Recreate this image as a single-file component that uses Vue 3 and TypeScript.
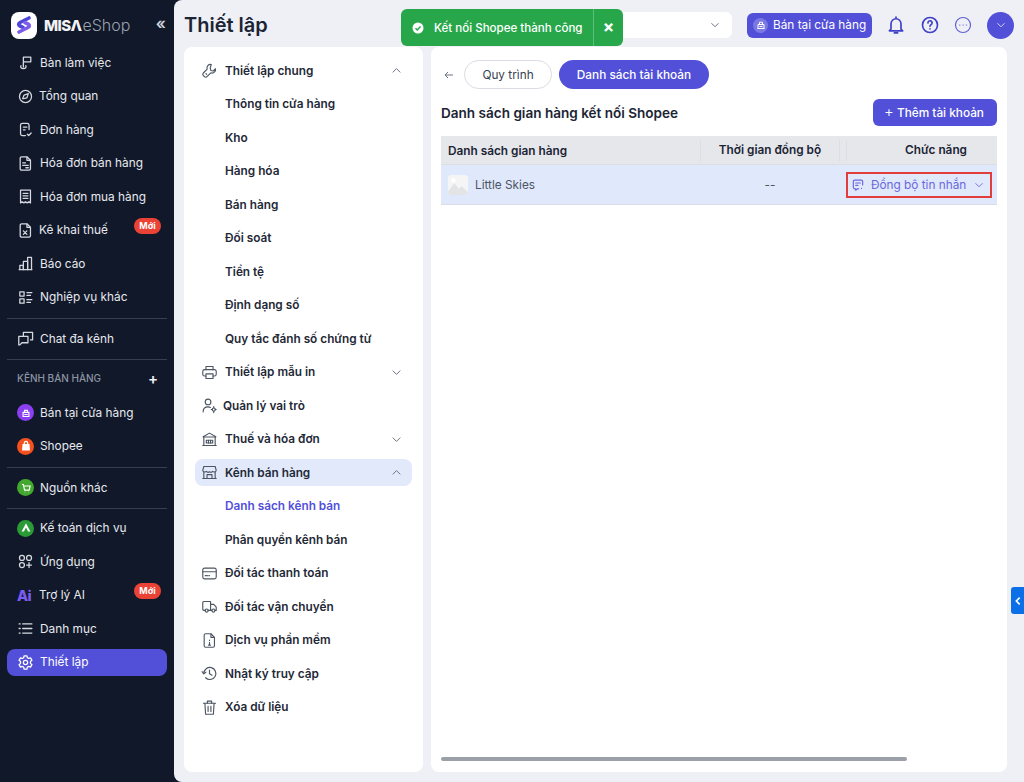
<script setup lang="ts">
interface NavItem {
  label: string
  icon?: string[]
  badge?: boolean
  active?: boolean
  tight?: boolean
  ai?: boolean
}
interface SetItem {
  label: string
  icon?: string[]
  chev?: 'up' | 'down'
  sub?: boolean
  active?: boolean
  tight?: boolean
  current?: boolean
}

const ic = {
  flag: ['M9 14V4.5h10.5V11H9', 'M9 14v4.5', 'M5.5 16.5c-1 2.5.5 4 3.5 4s4.5-1.5 3.5-4'],
  gauge: ['M12 3.5a8.5 8.5 0 1 0 0 17a8.5 8.5 0 1 0 0-17z', 'M8 15l2-5 6-2-2 6-5 1z'],
  order: ['M17 12V6a2.5 2.5 0 0 0-2.5-2.5h-7A2.5 2.5 0 0 0 5 6v12a2.5 2.5 0 0 0 2.5 2.5H12', 'M9 8.5h5M9 12.5h2.5', 'M14.5 18.5l2 2 3.5-3.5'],
  invoice: ['M6.5 2.5h7.5l5 5v12a2 2 0 0 1-2 2h-10.5a2 2 0 0 1-2-2v-15a2 2 0 0 1 2-2z', 'M14 3v4.5h4.5', 'M8 11h4M8 14.5h8M12.5 18h3.5'],
  receipt: ['M5 3h14v18l-2.3-1.6L14.3 21 12 19.4 9.7 21l-2.4-1.6L5 21z', 'M8.5 7.5h7M8.5 11h7M8.5 14.5h7'],
  tax: ['M6.5 2.5h7.5l5 5v12a2 2 0 0 1-2 2h-10.5a2 2 0 0 1-2-2v-15a2 2 0 0 1 2-2z', 'M14 3v4.5h4.5', 'M9 12.5l5 5M14 12.5l-5 5'],
  chart: ['M3 20.5h18', 'M4 20.5v-6h5v6', 'M9 20.5V9h6v11.5', 'M15 20.5V3.5h5.5v17'],
  ops: ['M4 4h6v6H4zM4 14h6v6H4z', 'M14 5h7M14 9h5M14 15h7M14 19h5'],
  chat: ['M9 8V3.5h13V14h-3', 'M2.5 9h13v9H7l-3 3h-1.5z'],
  apps: ['M7 3.5a3.5 3.5 0 1 0 0 7a3.5 3.5 0 1 0 0-7z', 'M17 3.5a3.5 3.5 0 1 0 0 7a3.5 3.5 0 1 0 0-7z', 'M7 13.5a3.5 3.5 0 1 0 0 7a3.5 3.5 0 1 0 0-7z', 'M17 13.5v7M13.5 17h7'],
  list: ['M8 5.5h13M8 12h13M8 18.5h13', 'M3 5.5h1.5M3 12h1.5M3 18.5h1.5'],
  gear: ['M12 9a3 3 0 1 0 0 6a3 3 0 1 0 0-6z', 'M10 2.5h4l.6 2.8 1.8 1 2.7-.9 2 3.4-2.1 1.9v2.5l2.1 1.9-2 3.4-2.7-.9-1.8 1-.6 2.8h-4l-.6-2.8-1.8-1-2.7.9-2-3.4 2.1-1.9v-2.5l-2.1-1.9 2-3.4 2.7.9 1.8-1z'],
  wrench: ['M14.5 3.5a5 5 0 0 0-5.8 6.6L3.3 15.5a2.6 2.6 0 0 0 0 3.6l1.6 1.6a2.6 2.6 0 0 0 3.6 0l5.4-5.4a5 5 0 0 0 6.6-5.8l-3.2 3.2-3.5-.8-.8-3.5z', 'M7 16.5l1 1'],
  printer: ['M7 8V3.5h10V8', 'M7 17H5a2.5 2.5 0 0 1-2.5-2.5v-4A2.5 2.5 0 0 1 5 8h14a2.5 2.5 0 0 1 2.5 2.5v4A2.5 2.5 0 0 1 19 17h-2', 'M7 14h10v6.5H7z'],
  role: ['M10 3a4 4 0 1 0 0 8a4 4 0 1 0 0-8z', 'M3 21c0-4.5 3-7 7-7 1.2 0 2.3.2 3.2.7', 'M18 15.5a2.2 2.2 0 1 0 0 4.4a2.2 2.2 0 1 0 0-4.4z', 'M18 13.5v1.5M18 20.5V22M14.5 17.7H16M20 17.7h1.5'],
  bank: ['M3 8l9-5 9 5', 'M3.5 8.5h17', 'M4 8.5v12h16v-12', 'M7.5 13h9v4h-9z', 'M10.5 13v4M13.5 13v4', 'M2.5 20.5h19'],
  store: ['M4 3.5h16l1.5 5.5a3 3 0 0 1-5 1.5 3.5 3.5 0 0 1-4.5.5 3.5 3.5 0 0 1-4.5-.5 3 3 0 0 1-5-1.5z', 'M4 11.5v9h16v-9', 'M8.5 20.5V15h7v5.5', 'M2.5 20.5h19'],
  card: ['M5 4.5h14a2.5 2.5 0 0 1 2.5 2.5v10a2.5 2.5 0 0 1-2.5 2.5H5A2.5 2.5 0 0 1 2.5 17V7A2.5 2.5 0 0 1 5 4.5z', 'M2.5 9.5h19', 'M6 15h3M11 15h1'],
  truck: ['M6 17.5H4a1.5 1.5 0 0 1-1.5-1.5V6.5A1.5 1.5 0 0 1 4 5h9.5v12.5H10', 'M13.5 9h4.5l3.5 4v4.5h-2', 'M8 15.5a2.2 2.2 0 1 0 0 4.4a2.2 2.2 0 1 0 0-4.4z', 'M17.5 15.5a2.2 2.2 0 1 0 0 4.4a2.2 2.2 0 1 0 0-4.4z', 'M13.5 17.5h2'],
  fileInfo: ['M6.5 2.5h7.5l5 5v12a2 2 0 0 1-2 2h-10.5a2 2 0 0 1-2-2v-15a2 2 0 0 1 2-2z', 'M14 3v4.5h4.5', 'M12 11.5v.5M12 14.5v4M10.5 18.5h3'],
  history: ['M4 12a8.5 8.5 0 1 1 2.5 6', 'M1.5 9.5L4 12.5l3-2.5', 'M12 7v5.5l3.5 2'],
  trash: ['M3.5 6h17', 'M9 6V3h6v3', 'M5.5 6l1 15.5h11l1-15.5', 'M10 10.5v7M14 10.5v7'],
}

const navTop: NavItem[] = [
  { label: 'Bàn làm việc', icon: ic.flag },
  { label: 'Tổng quan', icon: ic.gauge, tight: true },
  { label: 'Đơn hàng', icon: ic.order },
  { label: 'Hóa đơn bán hàng', icon: ic.invoice },
  { label: 'Hóa đơn mua hàng', icon: ic.receipt },
  { label: 'Kê khai thuế', icon: ic.tax, badge: true, tight: true },
  { label: 'Báo cáo', icon: ic.chart },
  { label: 'Nghiệp vụ khác', icon: ic.ops },
]
const navBottom: NavItem[] = [
  { label: 'Ứng dụng', icon: ic.apps },
  { label: 'Trợ lý AI', ai: true, badge: true, tight: true },
  { label: 'Danh mục', icon: ic.list },
  { label: 'Thiết lập', icon: ic.gear, active: true },
]

const settings: SetItem[] = [
  { label: 'Thiết lập chung', icon: ic.wrench, chev: 'up' },
  { label: 'Thông tin cửa hàng', sub: true },
  { label: 'Kho', sub: true },
  { label: 'Hàng hóa', sub: true },
  { label: 'Bán hàng', sub: true },
  { label: 'Đối soát', sub: true },
  { label: 'Tiền tệ', sub: true },
  { label: 'Định dạng số', sub: true },
  { label: 'Quy tắc đánh số chứng từ', sub: true },
  { label: 'Thiết lập mẫu in', icon: ic.printer, chev: 'down' },
  { label: 'Quản lý vai trò', icon: ic.role, tight: true },
  { label: 'Thuế và hóa đơn', icon: ic.bank, chev: 'down' },
  { label: 'Kênh bán hàng', icon: ic.store, chev: 'up', active: true },
  { label: 'Danh sách kênh bán', sub: true, current: true },
  { label: 'Phân quyền kênh bán', sub: true },
  { label: 'Đối tác thanh toán', icon: ic.card },
  { label: 'Đối tác vận chuyển', icon: ic.truck },
  { label: 'Dịch vụ phần mềm', icon: ic.fileInfo },
  { label: 'Nhật ký truy cập', icon: ic.history },
  { label: 'Xóa dữ liệu', icon: ic.trash },
]
</script>

<template>
  <div class="app">
    <aside class="side">
      <div class="brand">
        <span class="logo">
          <svg viewBox="0 0 26 26" width="26" height="26">
            <path d="M18 6L9 10.5c-1.8.9-1.8 2.7 0 3.5l3 1.3" fill="none" stroke="#4f46d8" stroke-width="3.6" stroke-linecap="round" />
            <path d="M8 20l9-4.5c1.8-.9 1.8-2.7 0-3.5l-3-1.3" fill="none" stroke="#7c5ce8" stroke-width="3.6" stroke-linecap="round" />
          </svg>
        </span>
        <span class="brand-a">MISΛ</span><span class="brand-b">eShop</span>
        <span class="collapse">«</span>
      </div>

      <div v-for="n in navTop" :key="n.label" class="nav" :class="{ tight: n.tight }">
        <svg class="nav-ic" viewBox="0 0 24 24"><path v-for="d in n.icon" :key="d" :d="d" /></svg>
        <span>{{ n.label }}</span>
        <em v-if="n.badge" class="badge">Mới</em>
      </div>
      <hr class="rule" />
      <div class="nav">
        <svg class="nav-ic" viewBox="0 0 24 24"><path v-for="d in ic.chat" :key="d" :d="d" /></svg>
        <span>Chat đa kênh</span>
      </div>
      <hr class="rule" />
      <div class="section"><span>KÊNH BÁN HÀNG</span><b>+</b></div>
      <div class="nav">
        <span class="dot purple">
          <svg viewBox="0 0 24 24"><path d="M7 18V11h10v7zM6 18h12M9.5 11V7.5h5V11M9 14.5h6" /></svg>
        </span>
        <span>Bán tại cửa hàng</span>
      </div>
      <div class="nav">
        <span class="dot orange">
          <svg viewBox="0 0 24 24"><path class="solid" d="M6 8.5h12l.8 11H5.2z" /><path d="M9 8.5c0-6 6-6 6 0" /></svg>
        </span>
        <span>Shopee</span>
      </div>
      <hr class="rule" />
      <div class="nav">
        <span class="dot green">
          <svg viewBox="0 0 24 24"><path d="M5 6h2.5l2 9.500h8L19 8.500H8" /><path d="M10 19h.5M16.500 19h.5" /></svg>
        </span>
        <span>Nguồn khác</span>
      </div>
      <hr class="rule snug" />
      <div class="nav">
        <span class="dot dgreen">
          <svg viewBox="0 0 24 24"><path class="solid" d="M12 4l7.5 14h-4L12 11l-3.5 7h-4z" /></svg>
        </span>
        <span>Kế toán dịch vụ</span>
      </div>
      <div v-for="n in navBottom" :key="n.label" class="nav" :class="{ tight: n.tight, active: n.active }">
        <span v-if="n.ai" class="ai">Ai</span>
        <svg v-else class="nav-ic" viewBox="0 0 24 24"><path v-for="d in n.icon" :key="d" :d="d" /></svg>
        <span>{{ n.label }}</span>
        <em v-if="n.badge" class="badge">Mới</em>
      </div>
    </aside>

    <main class="main">
      <header class="top">
        <h1>Thiết lập</h1>
        <div class="select">
          <svg class="chev" viewBox="0 0 24 24"><path d="M5 8.5l7 7 7-7" /></svg>
        </div>
        <button class="store-btn">
          <span class="store-ic">
            <svg viewBox="0 0 24 24"><path d="M6 19V11h12v8zM5 19h14M9 11V6.5h6V11M9 15h6" /></svg>
          </span>
          Bán tại cửa hàng
        </button>
        <svg class="top-ic" viewBox="0 0 24 24"><path d="M6 17V10.5a6 6 0 0 1 12 0V17l2 2H4zM10 21.5h4M12 2.5v2" /></svg>
        <svg class="top-ic" viewBox="0 0 24 24"><path d="M12 3a9 9 0 1 0 0 18a9 9 0 1 0 0-18z" /><path d="M9.5 9.5a2.5 2.5 0 1 1 3.8 2.1c-.9.6-1.3 1-1.3 2M12 16.5v.3" /></svg>
        <svg class="top-ic thin" viewBox="0 0 24 24"><path d="M12 3a9 9 0 1 0 0 18a9 9 0 1 0 0-18z" /><path d="M8 12h.3M12 12h.3M16 12h.3" /></svg>
        <span class="avatar">
          <svg viewBox="0 0 24 24"><path d="M5 8.5l7 7 7-7" /></svg>
        </span>
      </header>

      <div class="cols">
        <nav class="settings">
          <div
            v-for="s in settings"
            :key="s.label"
            class="set"
            :class="{ sub: s.sub, on: s.active, current: s.current, tight: s.tight }"
          >
            <svg v-if="s.icon" class="set-ic" viewBox="0 0 24 24"><path v-for="d in s.icon" :key="d" :d="d" /></svg>
            <span>{{ s.label }}</span>
            <svg v-if="s.chev" class="set-chev" viewBox="0 0 24 24">
              <path :d="s.chev === 'up' ? 'M5 15.5l7-7 7 7' : 'M5 8.5l7 7 7-7'" />
            </svg>
          </div>
        </nav>

        <section class="panel">
          <div class="tabs">
            <svg class="back" viewBox="0 0 24 24"><path d="M20 12H4.5M10 6l-6 6 6 6" /></svg>
            <button class="pill">Quy trình</button>
            <button class="pill solid-pill">Danh sách tài khoản</button>
          </div>
          <div class="head">
            <h2>Danh sách gian hàng kết nối Shopee</h2>
            <button class="add"><span class="plus">+</span> Thêm tài khoản</button>
          </div>
          <div class="table">
            <div class="tr th">
              <div class="c1">Danh sách gian hàng</div>
              <div class="c2">Thời gian đồng bộ</div>
              <div class="c3"><span>Chức năng</span></div>
            </div>
            <div class="tr td">
              <div class="c1">
                <span class="thumb">
                  <svg viewBox="0 0 22 22"><path d="M0 18l7-9 5 6 3-3 7 7v3H0z" fill="#e3e4e6" /><circle cx="6" cy="6" r="2.5" fill="#fff" /></svg>
                </span>
                Little Skies
              </div>
              <div class="c2">--</div>
              <div class="c3">
                <div class="sync">
                  <svg class="sync-ic" viewBox="0 0 24 24"><path d="M20 12V6a2.5 2.5 0 0 0-2.5-2.5h-11A2.5 2.5 0 0 0 4 6v10a2.5 2.5 0 0 0 2.5 2.5H8V21l3-2.5h2M8 8.5h8M8 12.5h4M18 17.5v.5" /></svg>
                  <span>Đồng bộ tin nhắn</span>
                  <svg class="sync-chev" viewBox="0 0 24 24"><path d="M5 8.5l7 7 7-7" /></svg>
                </div>
              </div>
            </div>
          </div>
          <div class="scroll"><i></i></div>
        </section>
      </div>
    </main>

    <div class="toast">
      <svg class="ok" viewBox="0 0 24 24"><circle cx="12" cy="12" r="11" fill="#fff" /><path d="M7 12.5l3.5 3.5L17 9" fill="none" stroke="#27a74a" stroke-width="3" /></svg>
      <span class="toast-text">Kết nối Shopee thành công</span>
      <span class="toast-x">×</span>
    </div>
    <div class="edge">
      <svg viewBox="0 0 24 24"><path d="M16 4l-8 8 8 8" /></svg>
    </div>
  </div>
</template>

<style>
html, body { margin: 0; background: #10182a; }
</style>

<style scoped>
* { box-sizing: border-box; }
.app {
  position: relative;
  display: flex;
  width: 1024px;
  height: 782px;
  overflow: hidden;
  background: #10182a;
  font-family: Inter, "Noto Sans", sans-serif;
  color: #1b2434;
}
.side {
  width: 174px;
  flex: none;
  display: flex;
  flex-direction: column;
  padding: 0 7px;
  color: #e7e9ee;
}
.brand {
  height: 46px;
  flex: none;
  display: flex;
  align-items: center;
  padding: 4px 0 0 4px;
  position: relative;
}
.logo {
  width: 26px;
  height: 27px;
  border-radius: 8px;
  background: #fff;
  display: flex;
  align-items: center;
  justify-content: center;
  margin-right: 7px;
}
.brand-a { font-size: 15px; font-weight: 800; color: #f2f3f6; letter-spacing: -0.6px; }
.brand-b { font-size: 16px; font-weight: 300; color: #9aa1ad; margin-left: 1px; }
.collapse {
  position: absolute;
  right: 1px;
  top: 13px;
  font-size: 16px;
  font-weight: 600;
  color: #cfd3da;
}
.nav {
  position: relative;
  height: 33.5px;
  flex: none;
  display: flex;
  align-items: center;
  gap: 6px;
  padding-left: 10px;
  font-size: 11.85px;
  font-weight: 400;
  white-space: nowrap;
}
.nav.tight { gap: 5px; }
.nav.active {
  height: 27px;
  margin-top: 3px;
  border-radius: 8px;
  background: #5250d8;
  color: #fff;
}
.nav-ic {
  width: 17px;
  height: 17px;
  flex: none;
  fill: none;
  stroke: #d6d9df;
  stroke-width: 1.8;
  stroke-linecap: round;
  stroke-linejoin: round;
}
.active .nav-ic { stroke: #fff; }
.badge {
  position: absolute;
  right: 6px;
  top: 4px;
  width: 27px;
  height: 16px;
  border-radius: 8px;
  background: #ea4335;
  color: #fff;
  font-style: normal;
  font-size: 9px;
  font-weight: 700;
  line-height: 16px;
  text-align: center;
}
.ai {
  width: 17px;
  flex: none;
  font-size: 14.5px;
  font-weight: 800;
  letter-spacing: -0.6px;
  color: #7a5cf0;
}
.dot {
  width: 17px;
  height: 17px;
  flex: none;
  border-radius: 50%;
  display: flex;
  align-items: center;
  justify-content: center;
}
.dot svg {
  width: 14px;
  height: 14px;
  fill: none;
  stroke: #fff;
  stroke-width: 2;
}
.dot .solid { fill: #fff; stroke: none; }
.purple { background: #8b3ff0; }
.orange { background: #f4511e; }
.green { background: #43a82f; }
.dgreen { background: #2a9b36; }
.rule {
  width: 100%;
  height: 1px;
  margin: 3.5px 0;
  border: 0;
  background: #373e4d;
  flex: none;
}
.rule.snug { margin: 3px 0; }
.section {
  height: 32.5px;
  flex: none;
  display: flex;
  align-items: center;
  justify-content: space-between;
  padding: 0 9px 3px 10px;
  font-size: 10px;
  font-weight: 500;
  color: #8d94a1;
}
.section b { font-size: 15px; font-weight: 600; color: #f0f1f4; }
.main {
  flex: 1;
  min-width: 0;
  display: flex;
  flex-direction: column;
  padding: 0 17px 10px 10px;
  background: #eef0f5;
  border-radius: 8px 0 0 8px;
}
.top {
  height: 47px;
  flex: none;
  display: flex;
  align-items: center;
  padding-top: 3px;
}
.top h1 {
  margin: 0;
  font-size: 20px;
  font-weight: 600;
  color: #1b2434;
}
.select {
  width: 132px;
  height: 26px;
  margin-left: auto;
  background: #fff;
  border-radius: 6px;
  display: flex;
  align-items: center;
  justify-content: flex-end;
  padding-right: 11px;
}
.chev {
  width: 12px;
  height: 12px;
  fill: none;
  stroke: #6b7280;
  stroke-width: 2;
}
.store-btn {
  width: 125px;
  height: 25px;
  margin-left: 15px;
  border: 0;
  border-radius: 6px;
  background: #5250d8;
  color: #fff;
  font: 400 11.8px Inter, sans-serif;
  display: flex;
  align-items: center;
  gap: 5px;
  padding: 0 0 0 6px;
  white-space: nowrap;
}
.store-ic {
  width: 15px;
  height: 15px;
  border-radius: 50%;
  background: #7a78e4;
  display: flex;
  align-items: center;
  justify-content: center;
}
.store-ic svg { width: 12px; height: 12px; fill: none; stroke: #fff; stroke-width: 2; }
.top-ic {
  width: 20px;
  height: 20px;
  margin-left: 14px;
  flex: none;
  fill: none;
  stroke: #3f3fc8;
  stroke-width: 2;
  stroke-linecap: round;
  stroke-linejoin: round;
}
.top-ic.thin { margin-left: 13px; stroke: #5f5fd8; stroke-width: 1.4; }
.avatar {
  width: 27px;
  height: 27px;
  margin-left: 14px;
  margin-right: -7px;
  border-radius: 50%;
  background: #5250d8;
  display: flex;
  align-items: center;
  justify-content: center;
  flex: none;
}
.avatar svg { width: 12px; height: 12px; fill: none; stroke: #d5d6f6; stroke-width: 2; }
.cols {
  flex: 1;
  min-height: 0;
  display: flex;
  gap: 8px;
}
.settings {
  width: 239px;
  flex: none;
  background: #fff;
  border-radius: 8px;
  padding: 7px 11px 0;
  display: flex;
  flex-direction: column;
}
.set {
  height: 27px;
  margin: 3.25px 0;
  flex: none;
  display: flex;
  align-items: center;
  gap: 7px;
  padding: 0 9px 0 6px;
  font-size: 11.8px;
  font-weight: 600;
  color: #1f2937;
  border-radius: 8px;
  white-space: nowrap;
}
.set.sub { padding-left: 30px; }
.set.tight { gap: 5px; }
.set.on { background: #e2e9fb; }
.set.current { color: #5250d8; }
.set-ic {
  width: 17px;
  height: 17px;
  flex: none;
  fill: none;
  stroke: #4b5563;
  stroke-width: 1.6;
  stroke-linecap: round;
  stroke-linejoin: round;
}
.set-chev {
  width: 13px;
  height: 13px;
  margin-left: auto;
  fill: none;
  stroke: #6b7280;
  stroke-width: 1.8;
}
.panel {
  flex: 1;
  min-width: 0;
  background: #fff;
  border-radius: 8px;
  padding: 13px 10px 11px;
  display: flex;
  flex-direction: column;
}
.tabs {
  display: flex;
  align-items: center;
  height: 29px;
  flex: none;
}
.back {
  width: 12px;
  height: 12px;
  margin: 0 9px 0 2px;
  fill: none;
  stroke: #6b7280;
  stroke-width: 2;
}
.pill {
  height: 29px;
  width: 88px;
  border: 1px solid #d9dce2;
  border-radius: 15px;
  background: #fff;
  font: 400 11.8px Inter, sans-serif;
  color: #374151;
  padding: 0;
}
.solid-pill {
  width: 150px;
  margin-left: 7px;
  border: 0;
  background: #5250d8;
  color: #fff;
  font-weight: 500;
}
.head {
  display: flex;
  align-items: center;
  justify-content: space-between;
  margin-top: 10px;
  height: 27px;
  flex: none;
}
.head h2 {
  margin: 0;
  font-size: 13.55px;
  font-weight: 600;
  color: #1b2434;
}
.add {
  width: 124px;
  height: 27px;
  border: 0;
  border-radius: 6px;
  background: #5250d8;
  color: #fff;
  font: 500 11.8px Inter, sans-serif;
  padding: 0 2px 0 0;
  white-space: nowrap;
}
.plus { font-size: 15px; font-weight: 300; line-height: 12px; }
.table {
  flex: 1;
  min-height: 0;
  margin-top: 10px;
}
.tr {
  display: grid;
  grid-template-columns: 259px 140px 1fr;
  align-items: center;
}
.th {
  height: 29px;
  padding-top: 1px;
  background: #e6e7eb;
  border-bottom: 1px solid #dcdee4;
  font-size: 11.8px;
  font-weight: 600;
  color: #1b2434;
}
.td {
  height: 40px;
  background: #e0e8fb;
  border-bottom: 1px solid #d9dde6;
  font-size: 11.8px;
  color: #4b5563;
}
.c1 {
  padding-left: 7px;
  display: flex;
  align-items: center;
  gap: 7px;
}
.c2 { text-align: center; }
.th .c2 {
  height: 21px;
  line-height: 21px;
  border-left: 1px solid #dcdee3;
  border-right: 1px solid #dcdee3;
}
.th .c3 {
  height: 21px;
  line-height: 21px;
  margin-left: 6px;
  padding-left: 28px;
  text-align: center;
  border-left: 1px solid #dcdee3;
}
.thumb {
  width: 20px;
  height: 20px;
  border-radius: 3px;
  background: #f5f5f6;
  overflow: hidden;
  display: block;
}
.thumb svg { display: block; width: 20px; height: 20px; }
.sync {
  width: 146px;
  height: 26px;
  margin-left: 6px;
  border: 2px solid #e23d3d;
  display: flex;
  align-items: center;
  padding: 0 5px 0 3px;
  color: #6a67e0;
}
.sync span { margin-left: 6px; }
.sync-ic {
  width: 14px;
  height: 14px;
  flex: none;
  fill: none;
  stroke: #6a67e0;
  stroke-width: 2;
  stroke-linecap: round;
  stroke-linejoin: round;
}
.sync-chev {
  width: 12px;
  height: 12px;
  margin-left: auto;
  fill: none;
  stroke: #6a67e0;
  stroke-width: 1.8;
}
.scroll {
  height: 4px;
  flex: none;
}
.scroll i {
  display: block;
  width: 466px;
  height: 4px;
  border-radius: 2px;
  background: #9a9fa8;
}
.toast {
  position: absolute;
  left: 401px;
  top: 9px;
  width: 222px;
  height: 37px;
  background: #27a74a;
  border-radius: 6px;
  display: flex;
  align-items: center;
  color: #fff;
  font-size: 11.55px;
  font-weight: 500;
}
.ok { width: 12px; height: 12px; margin-left: 11px; flex: none; }
.toast-text { margin-left: 10px; white-space: nowrap; }
.toast-x {
  position: absolute;
  right: 0;
  top: 0;
  width: 30px;
  height: 37px;
  border-left: 1px solid #5cc078;
  text-align: center;
  line-height: 36px;
  font-size: 17px;
  font-weight: 700;
}
.edge {
  position: absolute;
  right: 0;
  top: 587px;
  width: 13px;
  height: 27px;
  background: #0b6fe8;
  border-radius: 3px 0 0 3px;
  display: flex;
  align-items: center;
  justify-content: center;
}
.edge svg { width: 10px; height: 10px; fill: none; stroke: #fff; stroke-width: 4; }
</style>
